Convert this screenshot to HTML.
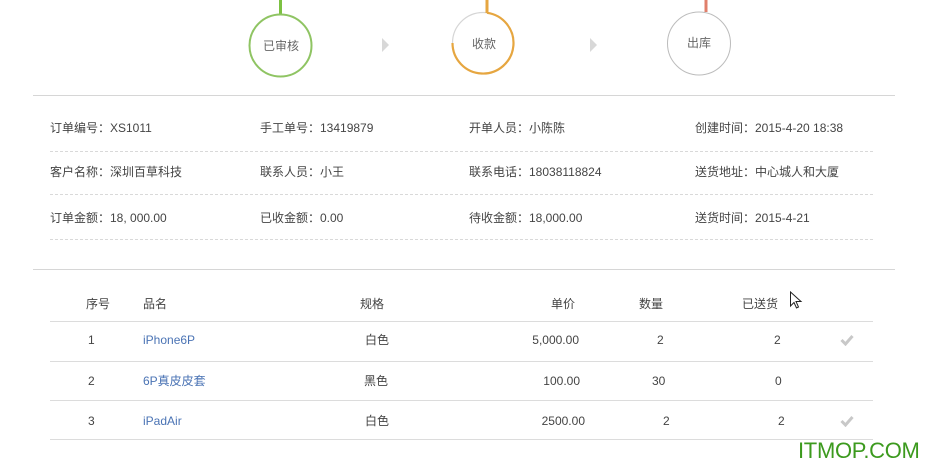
<!DOCTYPE html>
<html><head><meta charset="utf-8"><style>
body{margin:0;width:930px;height:476px;background:#fff;position:relative;overflow:hidden;font-family:"Liberation Sans","Noto Sans CJK SC",sans-serif;font-size:12px;color:#444}
.a{position:absolute;white-space:nowrap;line-height:16px;height:16px}
.hl{position:absolute;height:0;border-top:1px solid #d6d6d6}
.dl{position:absolute;left:50px;width:823px;height:0;border-top:1px dashed #d9d9d9}
.tl{position:absolute;left:50px;width:823px;height:0;border-top:1px solid #dcdcdc}
.lk{color:#4a73b4}
.r{text-align:right}
</style></head><body>
<svg class="a" style="left:0;top:0;height:100px;line-height:normal" width="930" height="100">
<line x1="280.5" y1="0" x2="280.5" y2="15" stroke="#7cc142" stroke-width="3"/>
<circle cx="280.5" cy="45.5" r="31" fill="none" stroke="#8fc463" stroke-width="2"/>
<circle cx="483" cy="43" r="30.5" fill="none" stroke="#d6d6d6" stroke-width="1.2"/>
<path d="M487 12.8 A30.5 30.5 0 1 1 452.5 43" fill="none" stroke="#e6a640" stroke-width="2.2"/>
<line x1="487" y1="0" x2="487" y2="13" stroke="#e6a640" stroke-width="3"/>
<circle cx="699" cy="43.5" r="31.5" fill="none" stroke="#bcbcbc" stroke-width="1"/>
<line x1="706" y1="0" x2="706" y2="12" stroke="#e07f6b" stroke-width="3"/>
<polygon points="382,38 389,45 382,52" fill="#d8d8d8"/>
<polygon points="590,38 597,45 590,52" fill="#d8d8d8"/>
<text x="281" y="50" font-size="12" fill="#666" text-anchor="middle" font-family="Liberation Sans,Noto Sans CJK SC,sans-serif">已审核</text>
<text x="484" y="48" font-size="12" fill="#666" text-anchor="middle" font-family="Liberation Sans,Noto Sans CJK SC,sans-serif">收款</text>
<text x="699" y="47" font-size="12" fill="#666" text-anchor="middle" font-family="Liberation Sans,Noto Sans CJK SC,sans-serif">出库</text>
</svg>
<div class="hl" style="left:33px;top:95px;width:862px"></div>
<div class="a" style="left:50px;top:120px">订单编号：XS1011</div>
<div class="a" style="left:260px;top:120px">手工单号：13419879</div>
<div class="a" style="left:469px;top:120px">开单人员：小陈陈</div>
<div class="a" style="left:695px;top:120px">创建时间：2015-4-20 18:38</div>
<div class="dl" style="top:151px"></div>
<div class="a" style="left:50px;top:164px">客户名称：深圳百草科技</div>
<div class="a" style="left:260px;top:164px">联系人员：小王</div>
<div class="a" style="left:469px;top:164px">联系电话：18038118824</div>
<div class="a" style="left:695px;top:164px">送货地址：中心城人和大厦</div>
<div class="dl" style="top:194px"></div>
<div class="a" style="left:50px;top:210px">订单金额：18, 000.00</div>
<div class="a" style="left:260px;top:210px">已收金额：0.00</div>
<div class="a" style="left:469px;top:210px">待收金额：18,000.00</div>
<div class="a" style="left:695px;top:210px">送货时间：2015-4-21</div>
<div class="dl" style="top:239px"></div>
<div class="hl" style="left:33px;top:269px;width:862px"></div>

<div class="a" style="left:86px;top:296px">序号</div>
<div class="a" style="left:143px;top:296px">品名</div>
<div class="a" style="left:360px;top:296px">规格</div>
<div class="a" style="left:551px;top:296px">单价</div>
<div class="a" style="left:639px;top:296px">数量</div>
<div class="a" style="left:742px;top:296px">已送货</div>
<svg class="a" style="left:789px;top:291px;height:20px" width="14" height="20"><path d="M1.5 1 L1.5 15 L5 11.5 L7.5 17 L9.5 16 L7 10.5 L12 10.5 Z" fill="#fff" stroke="#222" stroke-width="1"/></svg>
<div class="tl" style="top:321px"></div>
<div class="tl" style="top:361px"></div>
<div class="tl" style="top:400px"></div>
<div class="tl" style="top:439px"></div>

<div class="a" style="left:88px;top:332px">1</div>
<div class="a lk" style="left:143px;top:332px">iPhone6P</div>
<div class="a" style="left:365px;top:332px">白色</div>
<div class="a r" style="left:480px;top:332px;width:99px">5,000.00</div>
<div class="a" style="left:657px;top:332px">2</div>
<div class="a" style="left:774px;top:332px">2</div>
<svg class="a" style="left:840px;top:334px;height:12px" width="14" height="12"><path d="M1.5 6 L5.5 10 L12.5 2" fill="none" stroke="#c8c8c8" stroke-width="3"/></svg>

<div class="a" style="left:88px;top:373px">2</div>
<div class="a lk" style="left:143px;top:373px">6P真皮皮套</div>
<div class="a" style="left:364px;top:373px">黑色</div>
<div class="a r" style="left:480px;top:373px;width:100px">100.00</div>
<div class="a" style="left:652px;top:373px">30</div>
<div class="a" style="left:775px;top:373px">0</div>

<div class="a" style="left:88px;top:413px">3</div>
<div class="a lk" style="left:143px;top:413px">iPadAir</div>
<div class="a" style="left:365px;top:413px">白色</div>
<div class="a r" style="left:480px;top:413px;width:105px">2500.00</div>
<div class="a" style="left:663px;top:413px">2</div>
<div class="a" style="left:778px;top:413px">2</div>
<svg class="a" style="left:840px;top:415px;height:12px" width="14" height="12"><path d="M1.5 6 L5.5 10 L12.5 2" fill="none" stroke="#c8c8c8" stroke-width="3"/></svg>

<div class="a" style="left:798px;top:438px;height:26px;line-height:26px;color:#3c9a1e;font-size:22px;letter-spacing:-0.3px">ITMOP.COM</div>
</body></html>
